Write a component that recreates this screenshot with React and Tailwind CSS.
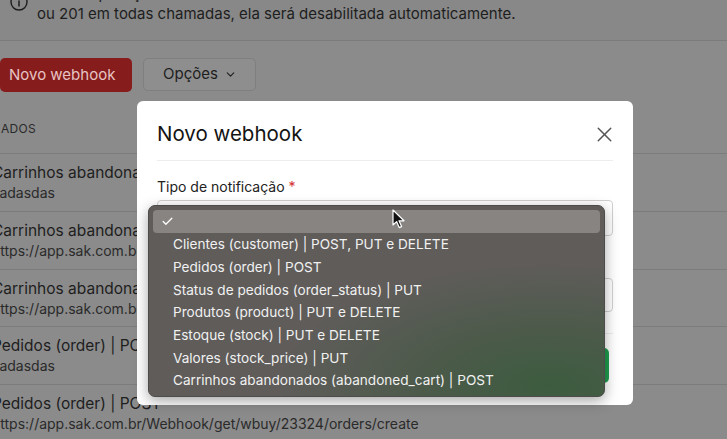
import React from "react";
import { ChevronDown, X, Check } from "lucide-react";

const rows = [
  { title: "Carrinhos abandonados (abandoned_cart) | POST", sub: "sadasdas" },
  { title: "Carrinhos abandonados (abandoned_cart) | POST", sub: "https://app.sak.com.br/Webhook/get/wbuy/23324/cart" },
  { title: "Carrinhos abandonados (abandoned_cart) | POST", sub: "https://app.sak.com.br/Webhook/get/wbuy/23324/cart" },
  { title: "Pedidos (order) | POST", sub: "sadasdas" },
  { title: "Pedidos (order) | POST", sub: "https://app.sak.com.br/Webhook/get/wbuy/23324/orders/create" },
];

const options = [
  "Clientes (customer) | POST, PUT e DELETE",
  "Pedidos (order) | POST",
  "Status de pedidos (order_status) | PUT",
  "Produtos (product) | PUT e DELETE",
  "Estoque (stock) | PUT e DELETE",
  "Valores (stock_price) | PUT",
  "Carrinhos abandonados (abandoned_cart) | POST",
];

function Cursor() {
  return (
    <svg width="13" height="20" viewBox="0 0 13 20">
      <path d="M1 1 L1 16 L4.6 12.6 L7.2 18.6 L9.6 17.6 L7 11.8 L12 11.8 Z" fill="#111" stroke="#fff" strokeWidth="1.2" strokeLinejoin="round" />
    </svg>
  );
}

export default function App() {
  return (
    <div className="relative h-[439px] w-[727px] overflow-hidden bg-[#8b8b8b] font-['Inter',sans-serif] text-[#1e1e1e]">
      {/* alert */}
      <div className="h-[41px] overflow-hidden border-b border-[#7b7b7b] bg-[#888888]">
        <div className="-mt-[16px] flex gap-[9px] pl-[10px]">
          <svg width="18" height="18" viewBox="0 0 18 18" className="mt-[9px] shrink-0">
            <circle cx="9" cy="9" r="8" fill="none" stroke="#1e1e1e" strokeWidth="1.4" />
            <path d="M9 8 L9 13" stroke="#1e1e1e" strokeWidth="1.5" strokeLinecap="round" />
            <circle cx="9" cy="5.2" r="0.9" fill="#1e1e1e" />
          </svg>
          <div className="text-[15px] leading-[20px]">
            <div className="whitespace-nowrap">Caso a aplicação destino não retorne o status de sucesso 200</div>
            <div className="whitespace-nowrap">ou 201 em todas chamadas, ela será desabilitada automaticamente.</div>
          </div>
        </div>
      </div>

      {/* actions */}
      <div className="mt-[17px] flex gap-[11px]">
        <button className="h-[34px] w-[132px] rounded-[5px] bg-[#861c1c] pl-[9px] text-left text-[15px] text-[#e6c4c4]">
          Novo webhook
        </button>
        <button className="flex h-[33px] w-[113px] items-center gap-[6px] rounded-[5px] border border-[#7f7f7f] bg-[#8e8e8e] pl-[19px] text-[15px]">
          Opções <ChevronDown size={13} strokeWidth={2} />
        </button>
      </div>

      {/* table */}
      <div className="flex h-[61px] items-center pt-[12px] pl-[1px] text-[12px] tracking-wide text-[#2a2a2a]">ADOS</div>
      <div>
        {rows.map((r, i) => (
          <div key={i} className="h-[57.75px] border-t border-[#7c7c7c] pt-[8px]">
            <div className="-ml-[8px] whitespace-nowrap text-[15.5px] leading-[22px]">{r.title}</div>
            <div className="-ml-[8px] whitespace-nowrap text-[14px] leading-[18px] text-[#2a2a2a]">{r.sub}</div>
          </div>
        ))}
      </div>

      {/* modal */}
      <div className="absolute left-[137px] top-[101px] h-[304px] w-[496px] rounded-[6px] bg-white px-[20px]">
        <div className="flex h-[60px] items-center justify-between border-b border-[#ededed] pt-[8px]">
          <div className="text-[20.5px] text-[#141414]">Novo webhook</div>
          <X size={25} strokeWidth={1.4} className="mr-[-4px] text-[#555]" />
        </div>
        <div className="mt-[16px] text-[14px] leading-[20px] text-[#222]">
          Tipo de notificação <span className="text-[#d32f2f]">*</span>
        </div>
        <div className="mt-[3px] h-[36px] rounded-[4px] border border-[#d0d0d0]"></div>
        <div className="mt-[14px] text-[14px] leading-[20px] text-[#222]">URL</div>
        <div className="mt-[8px] h-[34px] rounded-[4px] border border-[#d0d0d0]"></div>
        <div className="mt-[21px] flex justify-end border-t border-[#ededed] pt-[14px]">
          <div className="mr-[4px] h-[35px] w-[120px] rounded-[5px] bg-[#1f9e4f]"></div>
        </div>
      </div>

      {/* native select dropdown */}
      <div className="absolute left-[148px] top-[205px] w-[457px] rounded-[7px] border border-[#4e4c4a] bg-[#5f5c5a] bg-[radial-gradient(ellipse_at_88%_95%,#3c5c3f_0%,#4c5a4a_22%,transparent_48%)] p-[4px] shadow-[0_4px_14px_rgba(0,0,0,0.35)]">
        <div className="flex h-[23px] items-center rounded-[4px] bg-[#878482] pl-[8px]">
          <Check size={13} strokeWidth={2.4} className="text-white" />
        </div>
        {options.map((o) => (
          <div key={o} className="flex h-[22.7px] items-center pl-[20px] text-[13.6px] text-[#f1f1f1]">
            {o}
          </div>
        ))}
      </div>

      <div className="absolute left-[392px] top-[209px]">
        <Cursor />
      </div>
    </div>
  );
}
